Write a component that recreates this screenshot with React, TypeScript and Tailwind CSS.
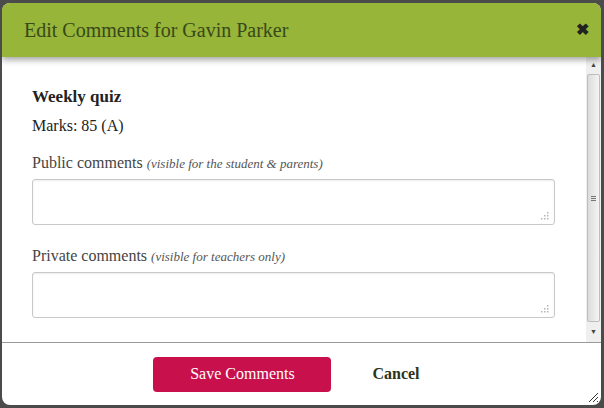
import React from "react";

const serif = { fontFamily: '"Liberation Serif", "DejaVu Serif", serif' };

const CommentField = ({ label, hint }: { label: string; hint: string }) => (
	<div className="flex flex-col">
		<label className="text-[16px] text-[#444] leading-[18px]">
			{label} <i className="text-[13px] text-[#555]">{hint}</i>
		</label>
		<div className="relative mt-[6px] h-[46px] w-[523px] rounded-[3px] border border-[#c8c8c8] bg-white shadow-[inset_0_1px_2px_rgba(0,0,0,0.08)]">
			<svg className="absolute bottom-[4px] right-[5px]" width="8" height="8" viewBox="0 0 8 8">
				<rect x="6" y="0" width="1.5" height="1.5" fill="#b5b5b5" />
				<rect x="3" y="3" width="1.5" height="1.5" fill="#b5b5b5" />
				<rect x="6" y="3" width="1.5" height="1.5" fill="#b5b5b5" />
				<rect x="0" y="6" width="1.5" height="1.5" fill="#b5b5b5" />
				<rect x="3" y="6" width="1.5" height="1.5" fill="#b5b5b5" />
				<rect x="6" y="6" width="1.5" height="1.5" fill="#b5b5b5" />
			</svg>
		</div>
	</div>
);

export default function App() {
	return (
		<div className="h-[408px] w-[604px] bg-[#4b4b4b] p-[3px_3px_3px_2px]" style={serif}>
			<div className="flex h-full flex-col overflow-hidden rounded-[8px] bg-white">
				{/* Header */}
				<div className="relative z-10 flex h-[54px] shrink-0 items-center justify-between bg-[#97b538] pl-[22px] pr-[12px] shadow-[0_3px_6px_rgba(0,0,0,0.35)]">
					<h1 className="text-[20px] text-[#38491a]">Edit Comments for Gavin Parker</h1>
					<span className="text-[16px] font-bold text-[#222]">✖</span>
				</div>

				{/* Body */}
				<div className="flex h-[285px] shrink-0">
					<div className="flex flex-1 flex-col pl-[30px] pt-[30px]">
						<div className="text-[17px] font-bold text-[#222] leading-[20px]">Weekly quiz</div>
						<div className="mt-[9px] text-[16px] text-[#222] leading-[20px]">Marks: 85 (A)</div>
						<div className="mt-[18px]">
							<CommentField label="Public comments" hint="(visible for the student & parents)" />
						</div>
						<div className="mt-[22px]">
							<CommentField label="Private comments" hint="(visible for teachers only)" />
						</div>
					</div>
					{/* Scrollbar */}
					<div className="flex w-[15px] flex-col items-center bg-[#efefef]">
						<div className="flex h-[17px] items-center justify-center text-[7px] text-[#444]">▲</div>
						<div className="flex h-[248px] w-[13px] items-center justify-center rounded-[2px] border border-[#bdbdbd] bg-gradient-to-r from-[#dcdcdc] to-[#f4f4f4]">
							<div className="flex flex-col gap-[1px]">
								<div className="h-[1px] w-[5px] bg-[#777]" />
								<div className="h-[1px] w-[5px] bg-[#777]" />
								<div className="h-[1px] w-[5px] bg-[#777]" />
							</div>
						</div>
						<div className="flex flex-1 items-center justify-center text-[7px] text-[#444]">▼</div>
					</div>
				</div>

				{/* Footer */}
				<div className="relative flex flex-1 items-center justify-center gap-[41px] border-t border-[#9a9a9a] pr-[30px]">
					<button className="h-[35px] w-[178px] rounded-[4px] bg-[#c8104c] text-[16px] text-white">Save Comments</button>
					<button className="text-[16px] font-bold text-[#2c3519]">Cancel</button>
					<svg className="absolute bottom-[2px] right-[2px]" width="11" height="11" viewBox="0 0 11 11">
						<path d="M10 1L1 10M10 5L5 10M10 9L9 10" stroke="#333" strokeWidth="1" />
					</svg>
				</div>
			</div>
		</div>
	);
}
